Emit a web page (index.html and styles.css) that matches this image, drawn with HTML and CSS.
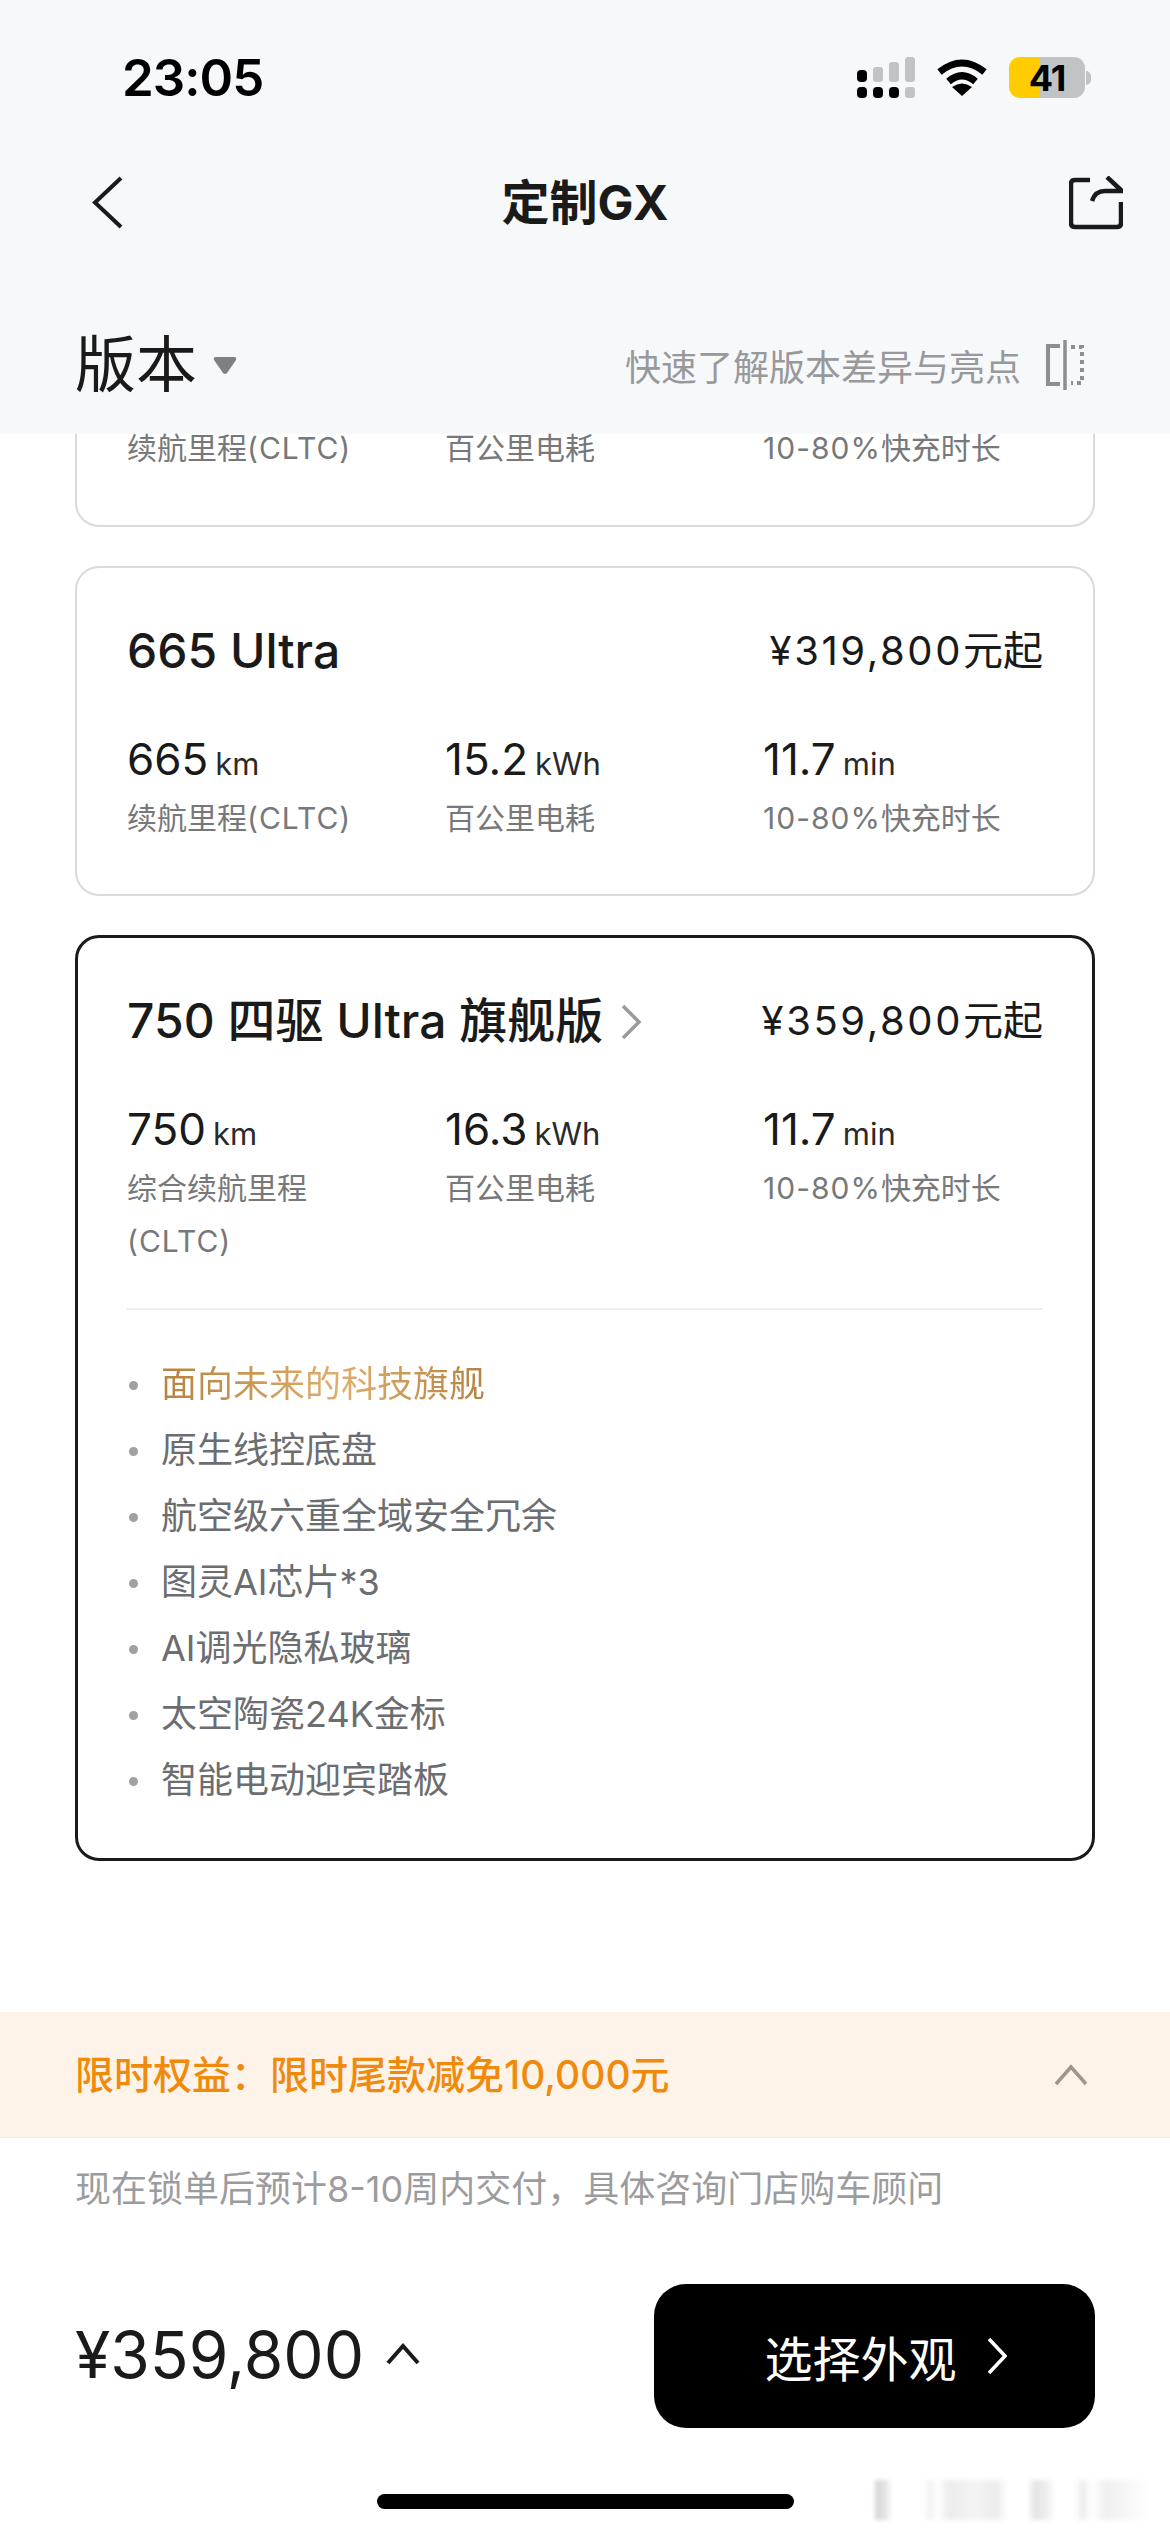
FILE: index.html
```html
<!DOCTYPE html>
<html lang="zh-CN">
<head>
    <meta charset="UTF-8">
    <meta name="viewport" content="width=device-width, initial-scale=1.0">
    <title>定制GX</title>
    <link rel="stylesheet" href="styles.css">
</head>
<body>
    <div class="page">
        <div class="top-bar">
            <div class="status-bar">
                <span class="time">23:05</span>
                <div class="status-icons">
                    <svg class="icon-signal" width="58" height="41" viewBox="0 0 58 41">
                        <rect x="0" y="13" width="10" height="12" rx="4" fill="#000"/>
                        <rect x="16" y="10" width="10" height="15" rx="3" fill="#c2c3c5"/>
                        <rect x="32" y="5" width="10" height="20" rx="3" fill="#c2c3c5"/>
                        <rect x="48" y="0" width="10" height="25" rx="3" fill="#c2c3c5"/>
                        <rect x="0" y="30" width="10" height="11" rx="4" fill="#000"/>
                        <rect x="16" y="30" width="10" height="11" rx="4" fill="#000"/>
                        <rect x="32" y="30" width="10" height="11" rx="4" fill="#000"/>
                        <rect x="48" y="30" width="10" height="11" rx="3" fill="#c2c3c5"/>
                    </svg>
                    <svg class="icon-wifi" width="50" height="37" viewBox="0 0 50 37">
                        <path d="M2.500 13 Q25 -5 47.500 13" fill="none" stroke="#000" stroke-width="7"/>
                        <path d="M11.500 22.500 Q25 11 38.500 22.500" fill="none" stroke="#000" stroke-width="7"/>
                        <path d="M25 37 L15 28 Q25 21 35 28 Z" fill="#000"/>
                    </svg>
                    <div class="battery">
                        <div class="battery-body"><span class="battery-level">41</span></div>
                        <div class="battery-nub"></div>
                    </div>
                </div>
            </div>
            <div class="nav-bar">
                <svg class="nav-back" width="34" height="54" viewBox="0 0 34 54">
                    <path d="M31 2 L5 26.500 L31 51" fill="none" stroke="#1a1a1a" stroke-width="4"/>
                </svg>
                <h1 class="nav-title">定制GX</h1>
                <svg class="nav-share" width="54" height="54" viewBox="0 0 54 54">
                    <path d="M21 4 H6 Q2 4 2 8 V47 Q2 51 6 51 H48 Q52 51 52 47 V26" fill="none" stroke="#1a1a1a" stroke-width="4.500"/>
                    <path d="M23 25 Q26 15 36 15 H53 L38 1" fill="none" stroke="#1a1a1a" stroke-width="4.500"/>
                </svg>
            </div>
            <div class="section-head">
                <div class="section-left">
                    <span class="section-title">版本</span>
                    <svg width="24" height="19" viewBox="0 0 24 19">
                        <path d="M3 1 H21 Q24 1 23 4 L14 17 Q12 19 10 17 L1 4 Q0 1 3 1 Z" fill="#808082"/>
                    </svg>
                </div>
                <div class="section-right">
                    <span class="section-hint">快速了解版本差异与亮点</span>
                    <svg width="40" height="50" viewBox="0 0 40 50">
                        <path d="M15 6 H3 V44 H15" fill="none" stroke="#8e8e90" stroke-width="4"/>
                        <path d="M20 0 V50" fill="none" stroke="#8e8e90" stroke-width="3.500"/>
                        <path d="M26 7 H37 V43 H26" fill="none" stroke="#8e8e90" stroke-width="4" stroke-dasharray="4 4"/>
                    </svg>
                </div>
            </div>
        </div>

        <div class="version-list">
            <div class="card card-clipped">
                <div class="stats">
                    <span class="stat-label">续航里程<span class="latin">(CLTC)</span></span>
                    <span class="stat-label">百公里电耗</span>
                    <span class="stat-label"><span class="latin">10-80%</span>快充时长</span>
                </div>
            </div>

            <div class="card">
                <div class="card-head">
                    <span class="card-title">665 Ultra</span>
                    <span class="card-price"><span class="price-num">¥319,800</span>元起</span>
                </div>
                <div class="stats">
                    <div>
                        <div class="stat-value">665<small>km</small></div>
                        <div class="stat-label">续航里程<span class="latin">(CLTC)</span></div>
                    </div>
                    <div>
                        <div class="stat-value">15.2<small>kWh</small></div>
                        <div class="stat-label">百公里电耗</div>
                    </div>
                    <div>
                        <div class="stat-value">11.7<small>min</small></div>
                        <div class="stat-label"><span class="latin">10-80%</span>快充时长</div>
                    </div>
                </div>
            </div>

            <div class="card card-active">
                <div class="card-head">
                    <span class="card-title">750 四驱 Ultra 旗舰版
                        <svg class="title-arrow" width="22" height="36" viewBox="0 0 22 36">
                            <path d="M3 2 L19 18 L3 34" fill="none" stroke="#9a9a9c" stroke-width="3.500"/>
                        </svg>
                    </span>
                    <span class="card-price"><span class="price-num">¥359,800</span>元起</span>
                </div>
                <div class="stats">
                    <div>
                        <div class="stat-value">750<small>km</small></div>
                        <div class="stat-label">综合续航里程<br><span class="latin">(CLTC)</span></div>
                    </div>
                    <div>
                        <div class="stat-value">16.3<small>kWh</small></div>
                        <div class="stat-label">百公里电耗</div>
                    </div>
                    <div>
                        <div class="stat-value">11.7<small>min</small></div>
                        <div class="stat-label"><span class="latin">10-80%</span>快充时长</div>
                    </div>
                </div>
                <ul class="features">
                    <li><span class="feature-gold">面向未来的科技旗舰</span></li>
                    <li>原生线控底盘</li>
                    <li>航空级六重全域安全冗余</li>
                    <li>图灵AI芯片*3</li>
                    <li>AI调光隐私玻璃</li>
                    <li>太空陶瓷24K金标</li>
                    <li>智能电动迎宾踏板</li>
                </ul>
            </div>
        </div>

        <div class="promo">
            <span class="promo-text">限时权益：限时尾款减免10,000元</span>
            <svg width="34" height="22" viewBox="0 0 34 22">
                <path d="M2 20 L17 3 L32 20" fill="none" stroke="#9b9690" stroke-width="3.500"/>
            </svg>
        </div>
        <p class="delivery-note">现在锁单后预计8-10周内交付，具体咨询门店购车顾问</p>

        <div class="checkout">
            <div class="total">
                <span class="total-price">¥359,800</span>
                <svg width="34" height="22" viewBox="0 0 34 22">
                    <path d="M2 20 L17 3 L32 20" fill="none" stroke="#1a1a1a" stroke-width="4"/>
                </svg>
            </div>
            <button class="next-btn">选择外观
                <svg width="20" height="38" viewBox="0 0 20 38">
                    <path d="M2 2 L18 19 L2 36" fill="none" stroke="#fff" stroke-width="3.500"/>
                </svg>
            </button>
        </div>
        <div class="home-indicator"></div>
        <div class="watermark"></div>
    </div>
</body>
</html>
```

FILE: styles.css
```css
* {
    box-sizing: border-box;
}
body {
    margin: 0;
    padding: 0;
    background-color: #fff;
    font-family: Inter, "Noto Sans CJK SC", sans-serif;
    color: #1a1a1a;
}
.page {
    width: 1170px;
    height: 2532px;
    overflow: hidden;
    position: relative;
}

/* top */
.top-bar {
    height: 434px;
    background-color: #f7f8fa;
    padding: 57px 75px 0;
}
.status-bar {
    display: flex;
    justify-content: space-between;
    align-items: center;
    height: 41px;
    padding-left: 47px;
    margin-right: 4px;
}
.time {
    font-family: Inter, sans-serif;
    font-size: 51px;
    font-weight: 600;
    color: #000;
    letter-spacing: -1px;
}
.status-icons {
    display: flex;
    align-items: center;
    gap: 22px;
}
.battery {
    display: flex;
    align-items: center;
    gap: 1px;
}
.battery-body {
    width: 76px;
    height: 41px;
    border-radius: 11px;
    background: linear-gradient(90deg, #ffcc00 41%, #c2c3c5 41%);
    display: flex;
    align-items: center;
    justify-content: center;
}
.battery-level {
    font-size: 36px;
    font-weight: 700;
    color: #000;
    letter-spacing: -1px;
}
.battery-nub {
    width: 5px;
    height: 14px;
    border-radius: 0 6px 6px 0;
    background-color: #c2c3c5;
}
.nav-bar {
    display: grid;
    grid-template-columns: 1fr auto 1fr;
    align-items: center;
    margin-top: 78px;
}
.nav-back {
    justify-self: start;
    margin-left: 15px;
}
.nav-share {
    justify-self: end;
    margin-right: -28px;
}
.nav-title {
    margin: 0;
    font-size: 48px;
    font-weight: 700;
    line-height: 54px;
}
.section-head {
    display: flex;
    justify-content: space-between;
    align-items: center;
    margin-top: 95px;
    margin-right: 10px;
}
.section-left {
    display: flex;
    align-items: center;
    gap: 16px;
}
.section-title {
    font-size: 61px;
    font-weight: 400;
    line-height: 80px;
}
.section-right {
    display: flex;
    align-items: center;
    gap: 24px;
}
.section-hint {
    font-size: 36px;
    color: #98999b;
}

/* cards */
.version-list {
    display: flex;
    flex-direction: column;
    gap: 39px;
    padding: 0 75px;
}
.card {
    height: 330px;
    border: 2px solid #d9dadc;
    border-radius: 24px;
    padding: 0 50px;
    background-color: #fff;
}
.card-clipped {
    height: 93px;
    border-top: none;
    border-radius: 0 0 24px 24px;
}
.card-active {
    height: 926px;
    border: 3px solid #1a1a1a;
    padding: 0 49px;
}
.card-head {
    display: flex;
    justify-content: space-between;
    align-items: center;
    height: 62px;
    margin-top: 52px;
}
.card-title {
    font-size: 48px;
    font-weight: 500;
    line-height: 62px;
    display: flex;
    align-items: center;
    gap: 17px;
}
.title-arrow {
    margin-top: 2px;
}
.card-price {
    font-size: 40px;
    line-height: 62px;
}
.price-num {
    letter-spacing: 2.600px;
}
.stats {
    display: grid;
    grid-template-columns: 318px 318px 1fr;
    margin-top: 52px;
}
.card-clipped .stats {
    margin-top: 0;
}
.stat-value {
    font-size: 44px;
    line-height: 50px;
}
.stat-value small {
    font-size: 31px;
    margin-left: 7px;
    color: #2a2a2a;
}
.stat-label {
    font-size: 30px;
    line-height: 53px;
    color: #77787a;
    display: block;
    margin-top: 3px;
}
.card-clipped .stat-label {
    margin-top: -12px;
}
.latin {
    letter-spacing: 1px;
}
.features {
    list-style: none;
    margin: 40px 0 0;
    padding: 41px 0 0;
    border-top: 2px solid #eeeeef;
    display: flex;
    flex-direction: column;
}
.features li {
    position: relative;
    padding-left: 34px;
    font-size: 36px;
    line-height: 66px;
    color: #6c6d70;
}
.features li::before {
    content: "";
    position: absolute;
    left: 2px;
    top: 30px;
    width: 9px;
    height: 9px;
    border-radius: 50%;
    background-color: #a0a0a2;
}
.feature-gold {
    background: linear-gradient(90deg, #b5833f, #dfae6c 55%, #b5823f);
    -webkit-background-clip: text;
    background-clip: text;
    color: transparent;
}

/* bottom */
.promo {
    display: flex;
    justify-content: space-between;
    align-items: center;
    height: 126px;
    margin-top: 151px;
    padding: 0 82px 0 75px;
    background-color: #fef3e9;
    border-bottom: 1px solid #eeeae6;
}
.promo-text {
    font-size: 39px;
    font-weight: 500;
    color: #f08a0c;
    margin-bottom: 5px;
}
.delivery-note {
    margin: 25px 75px 0;
    font-size: 36px;
    line-height: 52px;
    color: #9c9c9e;
}
.checkout {
    display: flex;
    justify-content: space-between;
    align-items: center;
    margin-top: 69px;
    padding: 0 75px;
}
.total {
    display: flex;
    align-items: center;
    gap: 22px;
    margin-bottom: 4px;
}
.total-price {
    font-size: 64px;
    color: #1a1a1a;
}
.next-btn {
    width: 441px;
    height: 144px;
    border: none;
    border-radius: 32px;
    padding: 0 0 0 22px;
    background-color: #000;
    color: #fff;
    font-family: inherit;
    font-size: 48px;
    display: flex;
    align-items: center;
    justify-content: center;
    gap: 30px;
}
.home-indicator {
    width: 417px;
    height: 15px;
    margin: 66px 0 0 377px;
    border-radius: 8px;
    background-color: #000;
}
/* faint blurred stamp in the corner */
.watermark {
    position: absolute;
    left: 875px;
    top: 2480px;
    width: 285px;
    height: 40px;
    filter: blur(2px);
    background: linear-gradient(90deg, #d4d4d4 0, #e4e4e4 10px, #fff 18px, #fff 48px, #f2f2f2 55px, #fff 62px, #ececec 75px, #f4f4f4 100px, #ececec 122px, #fff 132px, #fff 152px, #e4e4e4 160px, #eee 172px, #fff 180px, #fff 200px, #ececec 208px, #fff 216px, #f0f0f0 232px, #f6f6f6 250px, #fff 275px);
}
```
